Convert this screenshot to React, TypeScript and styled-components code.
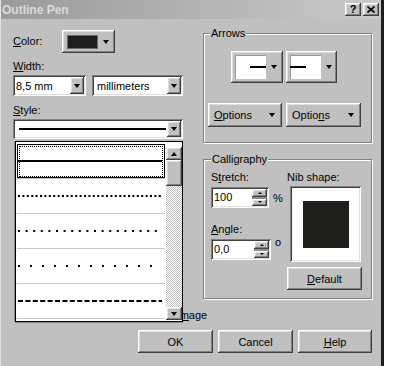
import React from "react";
import styled, { createGlobalStyle, css } from "styled-components";

const Global = createGlobalStyle`
  html, body { margin: 0; padding: 0; background: #fff; }
  body { font-family: "Liberation Sans", Arial, sans-serif; font-size: 11px; color: #000; }
  * { box-sizing: border-box; }
`;

const raised = css`
  background: #c0c0c0;
  box-shadow: inset -1px -1px #404040, inset 1px 1px #fff, inset -2px -2px #808080, inset 2px 2px #dfdfdf;
`;

const sunken = css`
  box-shadow: inset 1px 1px #808080, inset -1px -1px #fff, inset 2px 2px #404040, inset -2px -2px #dfdfdf;
`;

const Window = styled.div`
  width: 384px;
  height: 366px;
  background: #c0c0c0;
  border-left: 1px solid #e2e2e2;
  border-right: 3px solid #1c1c1c;
  display: flex;
  flex-direction: column;
  overflow: hidden;
`;

const TitleBar = styled.div`
  height: 19px;
  display: flex;
  align-items: center;
  justify-content: space-between;
  padding: 0 2px 0 1px;
  background: linear-gradient(to right, #9a9a9a, #cacaca);
`;

const Title = styled.span`
  font-weight: bold;
  font-size: 12px;
  color: #dadada;
`;

const CaptionButtons = styled.div`
  display: flex;
  gap: 2px;
`;

const CaptionButton = styled.div`
  ${raised};
  width: 16px;
  height: 13px;
  display: flex;
  align-items: center;
  justify-content: center;
  font-weight: bold;
  font-size: 11px;
  line-height: 1;
`;

const Main = styled.div`
  display: flex;
  padding: 11px 0 0 12px;
`;

const LeftCol = styled.div`
  width: 170px;
  position: relative;
  display: flex;
  flex-direction: column;
`;

const RightCol = styled.div`
  width: 169px;
  margin-left: 20px;
  display: flex;
  flex-direction: column;
`;

const Label = styled.div<{ $mt?: number; $w?: number }>`
  line-height: 13px;
  margin-top: ${(p) => p.$mt ?? 0}px;
  ${(p) => (p.$w ? `width: ${p.$w}px;` : "")}
  white-space: nowrap;
`;

const Row = styled.div<{ $mt?: number; $gap?: number; $pl?: number }>`
  display: flex;
  align-items: center;
  margin-top: ${(p) => p.$mt ?? 0}px;
  gap: ${(p) => p.$gap ?? 0}px;
  padding-left: ${(p) => p.$pl ?? 0}px;
`;

const Caret = styled.span<{ $up?: boolean }>`
  width: 0;
  height: 0;
  border-left: 3px solid transparent;
  border-right: 3px solid transparent;
  ${(p) => (p.$up ? "border-bottom: 4px solid #000;" : "border-top: 4px solid #000;")}
`;

const ColorButton = styled.div`
  ${raised};
  width: 53px;
  height: 23px;
  display: flex;
  align-items: center;
  padding-left: 5px;
  gap: 5px;
`;

const Swatch = styled.div`
  width: 31px;
  height: 14px;
  background: #1f1f1d;
  border: 1px solid #6a6a6a;
`;

const Combo = styled.div<{ $w: number; $h?: number }>`
  ${sunken};
  width: ${(p) => p.$w}px;
  height: ${(p) => p.$h ?? 21}px;
  background: #fff;
  display: flex;
  align-items: center;
  padding: 2px;
`;

const ComboText = styled.span<{ $pl?: number }>`
  flex: 1;
  padding-left: ${(p) => p.$pl ?? 1}px;
  white-space: nowrap;
`;

const DropButton = styled.div`
  ${raised};
  width: 14px;
  align-self: stretch;
  display: flex;
  align-items: center;
  justify-content: center;
  margin-left: auto;
`;

const ComboLine = styled.div`
  flex: 1;
  height: 2px;
  background: #000;
  margin: 0 1px 0 4px;
`;

const DropList = styled.div`
  position: absolute;
  left: 2px;
  top: 111px;
  width: 168px;
  height: 181px;
  background: #fff;
  border: 1px solid #000;
  box-shadow: -1px 0 #8a8a8a, 0 1px #8a8a8a;
  display: flex;
`;

const Items = styled.div`
  flex: 1;
  padding: 2px 1px 0 1px;
  display: flex;
  flex-direction: column;
`;

const Item = styled.div<{ $selected?: boolean }>`
  height: 35px;
  flex: none;
  border-bottom: 1px solid #c8c8c8;
  display: flex;
  align-items: center;
  padding-left: 1px;
  ${(p) =>
    p.$selected &&
    css`
      box-shadow: inset 0 0 0 1px #000;
      outline: 1px dotted #000;
      outline-offset: -3px;
    `}
`;

const Scrollbar = styled.div`
  width: 16px;
  margin: 5px 0 1px 0;
  display: flex;
  flex-direction: column;
`;

const ScrollButton = styled.div<{ $h: number }>`
  ${raised};
  height: ${(p) => p.$h}px;
  flex: none;
  display: flex;
  align-items: center;
  justify-content: center;
`;

const Track = styled.div`
  flex: 1;
  background-color: #c0c0c0;
  background-image: conic-gradient(#fff 25%, #c0c0c0 0 50%, #fff 0 75%, #c0c0c0 0);
  background-size: 2px 2px;
`;

const CheckRows = styled.div`
  display: flex;
  flex-direction: column;
  gap: 7px;
  margin-top: 150px;
  margin-left: 107px;
`;

const CheckRow = styled.div`
  display: flex;
  align-items: center;
  gap: 4px;
  line-height: 13px;
  white-space: nowrap;
`;

const CheckBox = styled.div`
  ${sunken};
  width: 13px;
  height: 13px;
  background: #fff;
`;

const Group = styled.div<{ $h: number; $mt: number }>`
  width: 169px;
  height: ${(p) => p.$h}px;
  margin-top: ${(p) => p.$mt}px;
  border: 1px solid #808080;
  box-shadow: inset 1px 1px #fff, 1px 1px #fff;
  display: flex;
  flex-direction: column;
`;

const Legend = styled.div<{ $x: number }>`
  align-self: flex-start;
  margin: -7px 0 0 ${(p) => p.$x}px;
  padding: 0 1px;
  background: #c0c0c0;
  line-height: 13px;
`;

const ArrowButton = styled.div<{ $w: number }>`
  ${raised};
  width: ${(p) => p.$w}px;
  height: 32px;
  display: flex;
  align-items: center;
  padding-left: 4px;
  gap: 5px;
`;

const ArrowPreview = styled.div<{ $side: "left" | "right" }>`
  width: 31px;
  height: 24px;
  background: #fff;
  box-shadow: inset 1px 1px #9a9a9a;
  display: flex;
  align-items: center;
  justify-content: ${(p) => (p.$side === "right" ? "flex-end" : "flex-start")};
`;

const ArrowStroke = styled.div`
  width: 16px;
  height: 2px;
  background: #000;
`;

const PushButton = styled.div<{ $w: number; $h: number }>`
  ${raised};
  width: ${(p) => p.$w}px;
  height: ${(p) => p.$h}px;
  display: flex;
  align-items: center;
  justify-content: center;
  white-space: nowrap;
`;

const OptionsButton = styled(PushButton)`
  justify-content: space-between;
  padding: 0 7px 0 6px;
`;

const SubCols = styled.div`
  display: flex;
`;

const SubCol = styled.div<{ $w?: number; $pl?: number }>`
  ${(p) => (p.$w ? `width: ${p.$w}px;` : "flex: 1;")}
  padding-left: ${(p) => p.$pl ?? 0}px;
  display: flex;
  flex-direction: column;
`;

const SpinField = styled.div<{ $w: number }>`
  ${sunken};
  width: ${(p) => p.$w}px;
  height: 21px;
  background: #fff;
  display: flex;
  padding: 2px;
`;

const SpinText = styled.span`
  flex: 1;
  padding-left: 1px;
  line-height: 17px;
`;

const SpinButtons = styled.div`
  width: 15px;
  display: flex;
  flex-direction: column;
  gap: 2px;
  background: #8c8c8c;
`;

const SpinButton = styled.div`
  ${raised};
  flex: 1;
  display: flex;
  align-items: center;
  justify-content: center;
`;

const TinyCaret = styled.span<{ $up?: boolean }>`
  width: 0;
  height: 0;
  border-left: 2px solid transparent;
  border-right: 2px solid transparent;
  ${(p) => (p.$up ? "border-bottom: 2px solid #000;" : "border-top: 2px solid #000;")}
`;

const Unit = styled.span<{ $top?: boolean }>`
  margin-left: 4px;
  ${(p) => (p.$top ? "align-self: flex-start; margin-top: -3px;" : "")}
`;

const NibBox = styled.div`
  ${sunken};
  width: 71px;
  height: 76px;
  background: #fff;
  margin: 2px 0 0 3px;
  display: flex;
  align-items: center;
  justify-content: center;
`;

const NibSquare = styled.div`
  width: 46px;
  height: 47px;
  background: #1f1f1c;
`;

const Footer = styled.div`
  margin-top: auto;
  display: flex;
  justify-content: flex-end;
  gap: 5px;
  padding: 0 9px 13px 0;
`;

const LineSample = ({ dash }: { dash?: string }) => (
  <svg width="144" height="2" style={{ display: "block" }}>
    <line x1="0" y1="1" x2="144" y2="1" stroke="#000" strokeWidth="2" strokeDasharray={dash} />
  </svg>
);

export default function App() {
  return (
    <>
      <Global />
      <Window>
        <TitleBar>
          <Title>Outline Pen</Title>
          <CaptionButtons>
            <CaptionButton>?</CaptionButton>
            <CaptionButton>
              <svg width="8" height="7" viewBox="0 0 8 7">
                <path d="M0.5 0.5 L7.5 6.5 M7.5 0.5 L0.5 6.5" stroke="#000" strokeWidth="1.6" />
              </svg>
            </CaptionButton>
          </CaptionButtons>
        </TitleBar>
        <Main>
          <LeftCol>
            <Row>
              <Label $w={49}>
                <u>C</u>olor:
              </Label>
              <ColorButton>
                <Swatch />
                <Caret />
              </ColorButton>
            </Row>
            <Label $mt={7}>
              <u>W</u>idth:
            </Label>
            <Row $mt={2} $gap={6}>
              <Combo $w={73}>
                <ComboText>8,5 mm</ComboText>
                <DropButton>
                  <Caret />
                </DropButton>
              </Combo>
              <Combo $w={91}>
                <ComboText $pl={3}>millimeters</ComboText>
                <DropButton>
                  <Caret />
                </DropButton>
              </Combo>
            </Row>
            <Label $mt={8}>
              <u>S</u>tyle:
            </Label>
            <Row $mt={2}>
              <Combo $w={170} $h={20}>
                <ComboLine />
                <DropButton>
                  <Caret />
                </DropButton>
              </Combo>
            </Row>
            <CheckRows>
              <CheckRow>
                <CheckBox />
                <span>Behind fill</span>
              </CheckRow>
              <CheckRow>
                <CheckBox />
                <span>
                  Scale with i<u>m</u>age
                </span>
              </CheckRow>
            </CheckRows>
            <DropList>
              <Items>
                <Item $selected>
                  <LineSample />
                </Item>
                <Item>
                  <LineSample dash="2 2.4" />
                </Item>
                <Item>
                  <LineSample dash="2 5.6" />
                </Item>
                <Item>
                  <LineSample dash="2 10" />
                </Item>
                <Item>
                  <LineSample dash="5 2.4" />
                </Item>
              </Items>
              <Scrollbar>
                <ScrollButton $h={13}>
                  <Caret $up />
                </ScrollButton>
                <ScrollButton $h={26} />
                <Track />
                <ScrollButton $h={13}>
                  <Caret />
                </ScrollButton>
              </Scrollbar>
            </DropList>
          </LeftCol>
          <RightCol>
            <Group $h={110} $mt={3}>
              <Legend $x={6}>Arrows</Legend>
              <Row $mt={11} $gap={3} $pl={27}>
                <ArrowButton $w={52}>
                  <ArrowPreview $side="right">
                    <ArrowStroke />
                  </ArrowPreview>
                  <Caret />
                </ArrowButton>
                <ArrowButton $w={51}>
                  <ArrowPreview $side="left">
                    <ArrowStroke />
                  </ArrowPreview>
                  <Caret />
                </ArrowButton>
              </Row>
              <Row $mt={20} $gap={4} $pl={4}>
                <OptionsButton $w={74} $h={24}>
                  <span>
                    <u>O</u>ptions
                  </span>
                  <Caret />
                </OptionsButton>
                <OptionsButton $w={75} $h={24}>
                  <span>
                    Optio<u>n</u>s
                  </span>
                  <Caret />
                </OptionsButton>
              </Row>
            </Group>
            <Group $h={140} $mt={16}>
              <Legend $x={7}>Calligraphy</Legend>
              <SubCols>
                <SubCol $w={83} $pl={7}>
                  <Label $mt={5}>
                    S<u>t</u>retch:
                  </Label>
                  <Row $mt={3}>
                    <SpinField $w={58}>
                      <SpinText>100</SpinText>
                      <SpinButtons>
                        <SpinButton>
                          <TinyCaret $up />
                        </SpinButton>
                        <SpinButton>
                          <TinyCaret />
                        </SpinButton>
                      </SpinButtons>
                    </SpinField>
                    <Unit>%</Unit>
                  </Row>
                  <Label $mt={15}>
                    <u>A</u>ngle:
                  </Label>
                  <Row $mt={3}>
                    <SpinField $w={60}>
                      <SpinText>0,0</SpinText>
                      <SpinButtons>
                        <SpinButton>
                          <TinyCaret $up />
                        </SpinButton>
                        <SpinButton>
                          <TinyCaret />
                        </SpinButton>
                      </SpinButtons>
                    </SpinField>
                    <Unit $top>o</Unit>
                  </Row>
                </SubCol>
                <SubCol>
                  <Label $mt={5}>Nib shape:</Label>
                  <NibBox>
                    <NibSquare />
                  </NibBox>
                  <Row $mt={5}>
                    <PushButton $w={75} $h={23}>
                      <span>
                        <u>D</u>efault
                      </span>
                    </PushButton>
                  </Row>
                </SubCol>
              </SubCols>
            </Group>
          </RightCol>
        </Main>
        <Footer>
          <PushButton $w={75} $h={23}>
            OK
          </PushButton>
          <PushButton $w={75} $h={23}>
            Cancel
          </PushButton>
          <PushButton $w={74} $h={23}>
            <span>
              <u>H</u>elp
            </span>
          </PushButton>
        </Footer>
      </Window>
    </>
  );
}
